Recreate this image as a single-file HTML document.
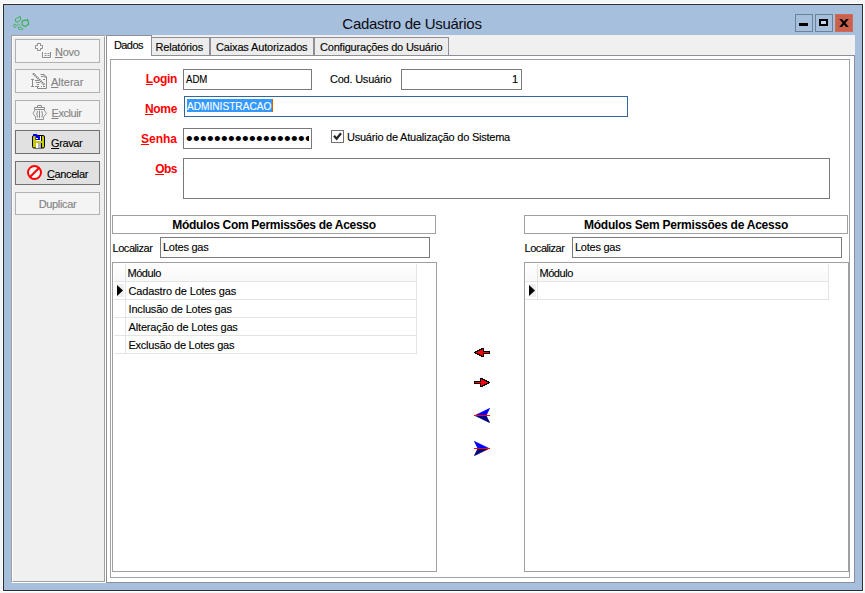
<!DOCTYPE html>
<html lang="pt-BR">
<head>
<meta charset="utf-8">
<title>Cadastro de Usuários</title>
<style>
*{box-sizing:border-box;margin:0;padding:0}
html,body{width:865px;height:593px;overflow:hidden;background:#f4f5f7}
body{position:relative;font-family:"Liberation Sans",sans-serif;font-size:11px;color:#000;line-height:13px}
.abs{position:absolute}
.t{position:absolute;white-space:nowrap;line-height:13px;height:13px;-webkit-text-stroke:0.12px currentColor}
u{text-decoration:underline;text-decoration-thickness:1px;text-underline-offset:1.5px;text-decoration-skip-ink:none}
#halo{left:2px;top:3px;width:862px;height:589px;background:#fff}
#win{left:3px;top:4px;width:860px;height:587px;background:#a6bfdc;border:1px solid #2e2e30}
#title{-webkit-text-stroke:0;left:0;top:15px;width:824px;text-align:center;font-size:15px;line-height:18px;height:18px;color:#0b0b14;letter-spacing:-0.29px}
.cap{position:absolute;top:14px;width:18px;height:18px;border:1px solid #6d8199}
#client{left:11px;top:35px;width:844px;height:548px;background:#f0f0f0}
#side{left:11px;top:35px;width:95px;height:548px;background:#f0f0f0;border:1px solid;border-color:#a0a0a0 #fff #fff #a0a0a0}
#side:before{content:"";position:absolute;left:0;top:0;right:0;bottom:0;border:1px solid;border-color:#fff #a0a0a0 #a0a0a0 #fff}
.btn{position:absolute;left:15px;width:85px;height:24px;border:1px solid #adb2b5;background:#f4f4f4;color:#838383}
.btn.on{border-color:#707070;background:#e1e1e1;color:#000}
.btn .t{top:6px}
.btn u,.lbl u{text-underline-offset:0.5px}
#pane{left:106px;top:55px;width:749px;height:528px;background:#fff;border:1px solid #8e8f96}
#inner{left:110px;top:59px;width:740px;height:519px;background:#fff;border:1px solid #a0a0a0}
.tab{position:absolute;top:37px;height:18px;border:1px solid #8e8f96;border-bottom:none;background:#ececec}
.tab.act{top:35px;height:21px;background:#fff}
.inp{position:absolute;height:21px;border:1px solid #7a7a7a;background:#fff}
.lbl{position:absolute;white-space:nowrap;font-weight:bold;font-size:12px;line-height:14px;height:14px;color:#ff0000;text-align:right}
.head{position:absolute;top:215px;width:324px;height:19px;border:1px solid #a0a0a0;background:#fff}
.head .t{-webkit-text-stroke:0;left:0;width:100%;text-align:center;top:2px;font-weight:bold;font-size:12px;line-height:14px;height:14px;letter-spacing:-0.3px}
.grid{position:absolute;top:262px;height:310px;border:1px solid #a0a0a0;background:#fff}
.hl{position:absolute;height:1px;background:#e4e4e4}
.vl{position:absolute;width:1px;background:#e4e4e4}
</style>
</head>
<body>
<div id="halo" class="abs"></div>
<div id="win" class="abs"></div>

<!-- title bar -->
<svg class="abs" style="left:12px;top:15px" width="18" height="16" viewBox="0 0 18 16">
 <g fill="none" stroke="#3db056" stroke-width="1" stroke-linejoin="round">
  <path d="M3.300 4 L8.300 1.400 L8.700 4 L6.200 7.100 L3.600 6.700 Z"/>
  <path d="M10 6.100 L15.600 4.600 L16.700 9.300 L13.100 11.500 L10.300 10 Z" stroke-width="1.250"/>
  <ellipse cx="2.900" cy="10.800" rx="1.400" ry="1.500" stroke-width="0.800"/>
  <path d="M5.900 12.500 L9.500 12.200 L11.300 14.100 L7.200 14.600 Z" stroke-width="0.800"/>
  <path d="M6.200 8.600 L8.300 10.200 M4.800 9.800 L6.500 10.600" stroke-width="0.800"/>
 </g>
</svg>
<div id="title" class="t" style="left:0;width:824px">Cadastro de Usuários</div>
<div class="cap" style="left:795px"><div class="abs" style="left:3px;top:8px;width:9px;height:3px;background:#000"></div></div>
<div class="cap" style="left:815px"><div class="abs" style="left:3px;top:4px;width:9px;height:7px;border:2px solid #000;background:#c3d6ec"></div></div>
<div class="cap" style="left:835px;background:#c9614c;border-color:#d06a55">
 <svg class="abs" style="left:3px;top:4px" width="10" height="8" viewBox="0 0 10 8"><path d="M0.2 0 H3 L5 2.4 L7 0 H9.8 L6.4 4 L9.8 8 H7 L5 5.6 L3 8 H0.2 L3.6 4 Z" fill="#000"/></svg>
</div>

<div id="client" class="abs"></div>

<!-- side panel -->
<div id="side" class="abs"></div>
<div class="btn" style="top:39px">
 <svg class="abs" style="left:18px;top:2px" width="19" height="18" viewBox="0 0 19 18">
  <path d="M4.500 2.500 H7.500 V4.500 H9.500 V7.500 H7.500 V9.500 H4.500 V7.500 H2.500 V4.500 H4.500 Z" fill="none" stroke="#fff"/>
  <path d="M3.500 1.500 H6.500 V3.500 H8.500 V6.500 H6.500 V8.500 H3.500 V6.500 H1.500 V3.500 H3.500 Z" fill="none" stroke="#8a8a8a"/>
  <path d="M9.500 11 V16.500 H17.500 V11" fill="none" stroke="#fff"/>
  <path d="M8.500 10 V15.500 H16.500 V10" fill="none" stroke="#8a8a8a"/>
  <path d="M10.500 11.500 H12.500 M13.500 11.500 H15.500 M10.500 13.500 H12.500 M13.500 13.500 H15.500" stroke="#929292" fill="none"/>
 </svg>
 <div class="t" style="left:39px;letter-spacing:-0.25px"><u>N</u>ovo</div>
</div>
<div class="btn" style="top:69px">
 <svg class="abs" style="left:15px;top:3px" width="17" height="17" viewBox="0 0 17 17">
  <path d="M9.500 1.500 H13 L15.500 4 V15.500 H6.500 V13.500" fill="none" stroke="#8a8a8a"/>
  <path d="M13 1.500 V4 H15.500" fill="none" stroke="#8a8a8a"/>
  <path d="M0 6.500 H3 M1.500 6.500 V13.500 M0 13.500 H3 M4 7.500 H8 M4 13.500 H8 M5 9.500 H9 M6 11.500 H8 M10 3.500 H12 M12 6.500 H14 M10 13.500 H11 M12 13.500 H14 M12 11.500 H13" stroke="#8a8a8a" fill="none"/>
  <path d="M3.200 0.200 L14.200 11.200" stroke="#fff" stroke-width="1.500" fill="none"/>
  <path d="M2 0.300 L13.500 11.800" stroke="#858585" stroke-width="2.200" fill="none" stroke-dasharray="1.500 0.600"/>
 </svg>
 <div class="t" style="left:35px"><u>A</u>lterar</div>
</div>
<div class="btn" style="top:100px">
 <svg class="abs" style="left:16px;top:4px" width="17" height="16" viewBox="0 0 17 16">
  <g fill="none" stroke="#8c8c8c">
  <path d="M5.500 2.500 V0.500 H9.500 V2.500"/>
  <path d="M2.500 4.500 V2.500 H12.500 V4.500 Z"/>
  <path d="M3 5 L1 8.300 L3.500 12 V14.500 H11.500 V12 L14.500 8.300 L12 5" stroke="#969696"/>
  <path d="M5.500 6 Q4.200 9 5.500 12.500 M7.500 5.500 V13 M9.800 6 Q11.100 9 9.800 12.500" stroke="#8c8c8c"/>
  </g>
 </svg>
 <div class="t" style="left:35.500px;letter-spacing:-0.42px"><u>E</u>xcluir</div>
</div>
<div class="btn on" style="top:130px">
 <svg class="abs" style="left:16px;top:3px" width="14" height="15" viewBox="0 0 14 15">
  <rect x="0.500" y="1.500" width="12" height="12.500" rx="1.500" fill="#c8c800" stroke="#000"/>
  <rect x="4" y="2" width="5" height="5" fill="#fff"/>
  <path d="M1 0 H4.500 L8 2.500 V6 H3.500 V2 H1 Z" fill="#0000e0"/>
  <rect x="4" y="4" width="2" height="1" fill="#fff"/>
  <rect x="9" y="2" width="1" height="5" fill="#000"/>
  <rect x="4" y="9" width="2" height="5" fill="#fff"/>
  <rect x="6" y="9" width="3" height="5" fill="#b4b4b4"/>
  <rect x="9" y="9" width="1" height="5" fill="#000"/>
 </svg>
 <div class="t" style="left:35px;letter-spacing:-0.4px"><u>G</u>ravar</div>
</div>
<div class="btn on" style="top:161px">
 <svg class="abs" style="left:10px;top:1.250px" width="18" height="18" viewBox="0 0 18 18">
  <circle cx="8.500" cy="9.500" r="7.300" fill="#dff" stroke="none"/>
  <circle cx="8.500" cy="9.500" r="6.500" fill="#e8f6f6" stroke="#ff0000" stroke-width="2"/>
  <path d="M4 14 L13 5" stroke="#ff0000" stroke-width="2"/>
 </svg>
 <div class="t" style="left:31px;letter-spacing:-0.39px"><u>C</u>ancelar</div>
</div>
<div class="btn" style="top:192px;height:23px">
 <div class="t" style="left:0;width:83px;text-align:center;top:5px;letter-spacing:-0.36px">Duplicar</div>
</div>

<!-- tabs -->
<div id="pane" class="abs"></div>
<div class="tab" style="left:152px;width:58px;border-left:none"><div class="t" style="left:3.500px;top:3px;letter-spacing:-0.2px">Relatórios</div></div>
<div class="tab" style="left:210px;width:104px"><div class="t" style="left:5px;top:3px;letter-spacing:-0.15px">Caixas Autorizados</div></div>
<div class="tab" style="left:314px;width:135px"><div class="t" style="left:5px;top:3px;letter-spacing:-0.2px">Configurações do Usuário</div></div>
<div class="tab act" style="left:106px;width:46px"><div class="t" style="left:7px;top:3px;letter-spacing:-0.6px">Dados</div></div>
<div id="inner" class="abs"></div>

<!-- form -->
<div class="lbl" style="left:119px;width:58px;top:72px;letter-spacing:-0.3px"><u>L</u>ogin</div>
<div class="inp" style="left:183px;top:69px;width:129px"><div class="t" style="left:2px;top:3px;transform:scaleX(0.875);transform-origin:0 0">ADM</div></div>
<div class="t" style="left:330px;top:73px;letter-spacing:-0.23px">Cod. Usuário</div>
<div class="inp" style="left:401px;top:69px;width:121px"><div class="t" style="right:3px;top:3px">1</div></div>

<div class="lbl" style="left:119px;width:58px;top:102px;letter-spacing:-0.33px"><u>N</u>ome</div>
<div class="inp" style="left:184px;top:96px;width:444px;border-color:#336699">
 <div class="abs" style="left:2px;top:2px;width:86px;height:13px;background:#3399ff"></div>
 <div class="t" style="left:2px;top:3px;color:#fff;transform:scaleX(0.92);transform-origin:0 0">ADMINISTRACAO</div>
 <div class="abs" style="left:87px;top:2px;width:1px;height:13px;background:#cc6600"></div>
</div>

<div class="lbl" style="left:119px;width:58px;top:132px"><u>S</u>enha</div>
<div class="inp" style="left:183px;top:128px;width:129px">
 <div class="abs" style="left:0;top:0;width:125px;height:19px;overflow:hidden"><div class="t" id="dots" style="left:2px;top:3px;font-size:19px;letter-spacing:0.35px">••••••••••••••••••</div></div>
</div>
<div class="abs" style="left:331px;top:130px;width:13px;height:13px;border:1px solid #707070;background:#fff">
 <svg class="abs" style="left:0;top:0" width="11" height="11" viewBox="0 0 11 11"><path d="M2 4.800 L4.600 7.800 L9 2.300" fill="none" stroke="#262626" stroke-width="2.300"/></svg>
</div>
<div class="t" style="left:347px;top:131px;letter-spacing:-0.23px">Usuário de Atualização do Sistema</div>

<div class="lbl" style="left:119px;width:58px;top:162px;letter-spacing:-0.5px"><u>O</u>bs</div>
<div class="inp" style="left:183px;top:158px;width:647px;height:41px"></div>

<!-- left list -->
<div class="head" style="left:112px"><div class="t">Módulos Com Permissões de Acesso</div></div>
<div class="t" style="left:112.500px;top:242px;letter-spacing:-0.45px">Localizar</div>
<div class="inp" style="left:160px;top:237px;width:270px"><div class="t" style="left:2px;top:3px;letter-spacing:-0.25px">Lotes gas</div></div>
<div class="grid" style="left:112px;width:325px">
 <div class="abs" style="left:1px;top:1px;width:302px;height:17px;background:linear-gradient(#fefefe,#f9f9f9)"></div>
 <div class="abs" style="left:4px;top:21px;width:7px;height:13px;background:#f0f0f0"></div>
 <div class="vl" style="left:12px;top:1px;height:90px"></div>
 <div class="vl" style="left:303px;top:1px;height:90px"></div>
 <div class="hl" style="left:1px;top:18px;width:303px"></div>
 <div class="hl" style="left:1px;top:36px;width:303px"></div>
 <div class="hl" style="left:1px;top:54px;width:303px"></div>
 <div class="hl" style="left:1px;top:72px;width:303px"></div>
 <div class="hl" style="left:1px;top:90px;width:303px"></div>
 <svg class="abs" style="left:4px;top:22px" width="6" height="11" viewBox="0 0 6 11"><path d="M0 0 L6 5.500 L0 11 Z" fill="#000"/></svg>
 <div class="t" style="left:14.500px;top:4px;letter-spacing:-0.46px">Módulo</div>
 <div class="t" style="left:15.500px;top:22px;letter-spacing:-0.15px">Cadastro de Lotes gas</div>
 <div class="t" style="left:15.500px;top:40px;letter-spacing:-0.18px">Inclusão de Lotes gas</div>
 <div class="t" style="left:15.500px;top:58px;letter-spacing:-0.15px">Alteração de Lotes gas</div>
 <div class="t" style="left:15.500px;top:76px;letter-spacing:-0.24px">Exclusão de Lotes gas</div>
</div>

<!-- arrows -->
<svg class="abs" shape-rendering="crispEdges" style="left:474px;top:348px" width="16" height="9" viewBox="0 0 16 9"><path d="M0.500 4.500 L8.500 0.500 H9.500 V3.500 H15.500 V5.500 H9.500 V8.500 H8.500 Z" fill="#ff0000" stroke="#000"/></svg>
<svg class="abs" shape-rendering="crispEdges" style="left:474px;top:378px" width="16" height="9" viewBox="0 0 16 9"><path d="M15.500 4.500 L7.500 0.500 H6.500 V3.500 H0.500 V5.500 H6.500 V8.500 H7.500 Z" fill="#ff0000" stroke="#000"/></svg>
<svg class="abs" style="left:474px;top:408px" width="16" height="15" viewBox="0 0 16 15"><path d="M1 7.500 L15.500 0.500 L12 7.500 Z" fill="#0000ff" stroke="#0000ff" stroke-width="0.800"/><path d="M1 7.500 L12 7.500 L15.500 14.500 Z" fill="#000080" stroke="#000080" stroke-width="0.800"/><rect x="0" y="7" width="16" height="1" fill="#ff0000"/></svg>
<svg class="abs" style="left:474px;top:441px" width="16" height="15" viewBox="0 0 16 15"><path d="M15 7.500 L0.500 0.500 L4 7.500 Z" fill="#0000ff" stroke="#0000ff" stroke-width="0.800"/><path d="M15 7.500 L4 7.500 L0.500 14.500 Z" fill="#000080" stroke="#000080" stroke-width="0.800"/><rect x="0" y="7" width="16" height="1" fill="#ff0000"/></svg>

<!-- right list -->
<div class="head" style="left:524px"><div class="t" style="letter-spacing:-0.24px;left:0">Módulos Sem Permissões de Acesso</div></div>
<div class="t" style="left:524.500px;top:242px;letter-spacing:-0.45px">Localizar</div>
<div class="inp" style="left:572px;top:237px;width:270px"><div class="t" style="left:2px;top:3px;letter-spacing:-0.25px">Lotes gas</div></div>
<div class="grid" style="left:524px;width:325px">
 <div class="abs" style="left:1px;top:1px;width:302px;height:17px;background:linear-gradient(#fefefe,#f9f9f9)"></div>
 <div class="abs" style="left:4px;top:21px;width:7px;height:13px;background:#f0f0f0"></div>
 <div class="vl" style="left:12px;top:1px;height:36px"></div>
 <div class="vl" style="left:303px;top:1px;height:36px"></div>
 <div class="hl" style="left:1px;top:18px;width:303px"></div>
 <div class="hl" style="left:1px;top:36px;width:303px"></div>
 <svg class="abs" style="left:4px;top:22px" width="6" height="11" viewBox="0 0 6 11"><path d="M0 0 L6 5.500 L0 11 Z" fill="#000"/></svg>
 <div class="t" style="left:14.500px;top:4px;letter-spacing:-0.46px">Módulo</div>
</div>
</body>
</html>
